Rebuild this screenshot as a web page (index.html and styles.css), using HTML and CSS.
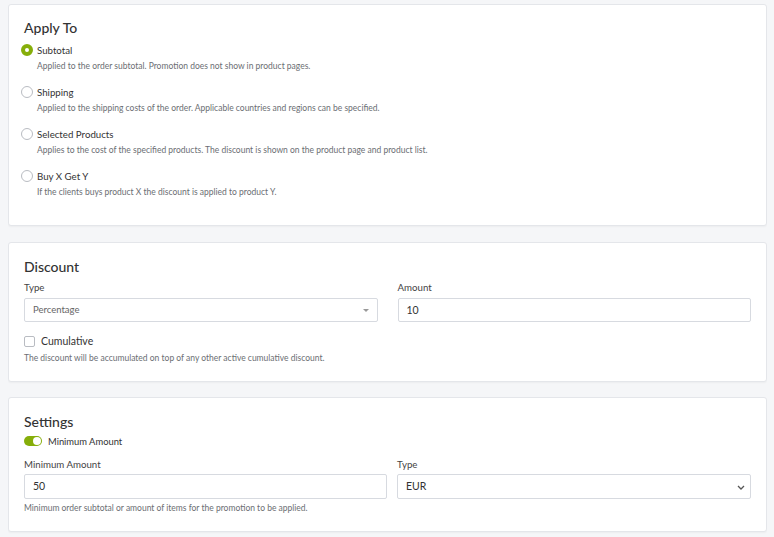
FILE: index.html
```html
<!DOCTYPE html>
<html lang="en">

<head>
    <meta charset="UTF-8">
    <meta name="viewport" content="width=device-width, initial-scale=1.0">
    <title>Promotion</title>
    <link rel="stylesheet" href="styles.css">
</head>

<body>
    <div class="card apply_to">
        <h2>Apply To</h2>
        <div class="option">
            <div class="option_title"><span class="radio checked"></span><span>Subtotal</span></div>
            <p class="hint">Applied to the order subtotal. Promotion does not show in product pages.</p>
        </div>
        <div class="option">
            <div class="option_title"><span class="radio"></span><span>Shipping</span></div>
            <p class="hint">Applied to the shipping costs of the order. Applicable countries and regions can be specified.</p>
        </div>
        <div class="option">
            <div class="option_title"><span class="radio"></span><span>Selected Products</span></div>
            <p class="hint">Applies to the cost of the specified products. The discount is shown on the product page and product list.</p>
        </div>
        <div class="option">
            <div class="option_title"><span class="radio"></span><span>Buy X Get Y</span></div>
            <p class="hint">If the clients buys product X the discount is applied to product Y.</p>
        </div>
    </div>

    <div class="card discount">
        <h2>Discount</h2>
        <div class="fields">
            <div class="field">
                <label>Type</label>
                <div class="control select caret">Percentage</div>
            </div>
            <div class="field">
                <label>Amount</label>
                <div class="control dark">10</div>
            </div>
        </div>
        <div class="check_row"><span class="checkbox"></span><span>Cumulative</span></div>
        <p class="hint">The discount will be accumulated on top of any other active cumulative discount.</p>
    </div>

    <div class="card settings">
        <h2>Settings</h2>
        <div class="toggle_row"><span class="toggle"></span><span>Minimum Amount</span></div>
        <div class="fields">
            <div class="field">
                <label>Minimum Amount</label>
                <div class="control dark">50</div>
            </div>
            <div class="field">
                <label>Type</label>
                <div class="control dark chevron">EUR
                    <svg width="8" height="5" viewBox="0 0 8 5"><path d="M1 1 L4 4 L7 1" fill="none" stroke="#555" stroke-width="1.3"/></svg>
                </div>
            </div>
        </div>
        <p class="hint">Minimum order subtotal or amount of items for the promotion to be applied.</p>
    </div>
</body>

</html>
```

FILE: styles.css
```css
* {
    margin: 0;
    padding: 0;
    box-sizing: border-box;
}

body {
    margin: 4px 7px 0 8px;
    background-color: #f5f6f8;
    font-family: "Lato", "Open Sans", sans-serif;
    color: #333;
}

.card {
    background-color: #fff;
    border: 1px solid #e4e6ea;
    border-radius: 3px;
    box-shadow: 0 1px 2px rgba(0, 0, 0, .04);
    padding: 14px 15px 15px 15px;
    margin-bottom: 15px;
}

h2 {
    font-size: 14px;
    font-weight: 500;
    line-height: 20px;
    color: #333;
}

.hint {
    font-size: 8.5px;
    line-height: 14px;
    color: #6b6e73;
}

/* apply to */
.apply_to {
    padding-top: 13px;
    height: 222px;
    margin-bottom: 16px;
}

.apply_to h2 {
    margin-bottom: 4px;
}

.option {
    margin-bottom: 10px;
}

.option_title {
    display: flex;
    align-items: center;
    gap: 4px;
    height: 16px;
    font-size: 9.7px;
    color: #333;
    margin-left: -3px;
}

.option .hint {
    margin-left: 13px;
    line-height: 16px;
}

.radio {
    width: 12px;
    height: 12px;
    border: 1px solid #b9bcc2;
    border-radius: 50%;
    background: #fff;
}

.radio.checked {
    border: 4px solid #86ae0a;
    background: #fff;
}

/* discount */
.discount {
    padding-bottom: 16px;
}

.discount h2 {
    margin-bottom: 3px;
}

.fields {
    display: grid;
    grid-template-columns: 1fr 1fr;
    column-gap: 20px;
}

.settings {
    padding-bottom: 16px;
}

.settings h2 {
    margin-bottom: 1px;
}

.settings .fields {
    grid-template-columns: 363px 1fr;
    column-gap: 10px;
    margin-top: 8px;
}

label {
    display: block;
    font-size: 9.7px;
    line-height: 14px;
    color: #444;
    margin-bottom: 4px;
}

.settings label {
    margin-bottom: 3px;
}

.control {
    position: relative;
    height: 24px;
    border: 1px solid #d7dae0;
    border-radius: 2px;
    padding: 0 8px;
    font-size: 9.5px;
    line-height: 22px;
    color: #666;
}

.control.dark {
    font-size: 10.5px;
    color: #333;
}

.settings .control {
    height: 25px;
    line-height: 23px;
}

.control.caret::after {
    content: "";
    position: absolute;
    right: 8px;
    top: 10px;
    border-left: 3.5px solid transparent;
    border-right: 3.5px solid transparent;
    border-top: 3.5px solid #999;
}

.control.chevron svg {
    position: absolute;
    right: 5px;
    top: 10px;
}

.check_row {
    display: flex;
    align-items: center;
    gap: 6px;
    height: 16px;
    margin-top: 11px;
    margin-bottom: 2px;
    font-size: 10.5px;
    color: #333;
}

.checkbox {
    width: 11px;
    height: 11px;
    border: 1px solid #b9bcc2;
    border-radius: 2px;
}

/* settings */
.toggle_row {
    display: flex;
    align-items: center;
    gap: 6px;
    height: 16px;
    font-size: 9.4px;
    color: #333;
}

.toggle {
    position: relative;
    width: 18px;
    height: 10px;
    border-radius: 5px;
    background: #86ae0a;
}

.toggle::after {
    content: "";
    position: absolute;
    right: 1px;
    top: 1px;
    width: 8px;
    height: 8px;
    border-radius: 50%;
    background: #fff;
}

.settings .hint {
    margin-top: 2px;
}
```
